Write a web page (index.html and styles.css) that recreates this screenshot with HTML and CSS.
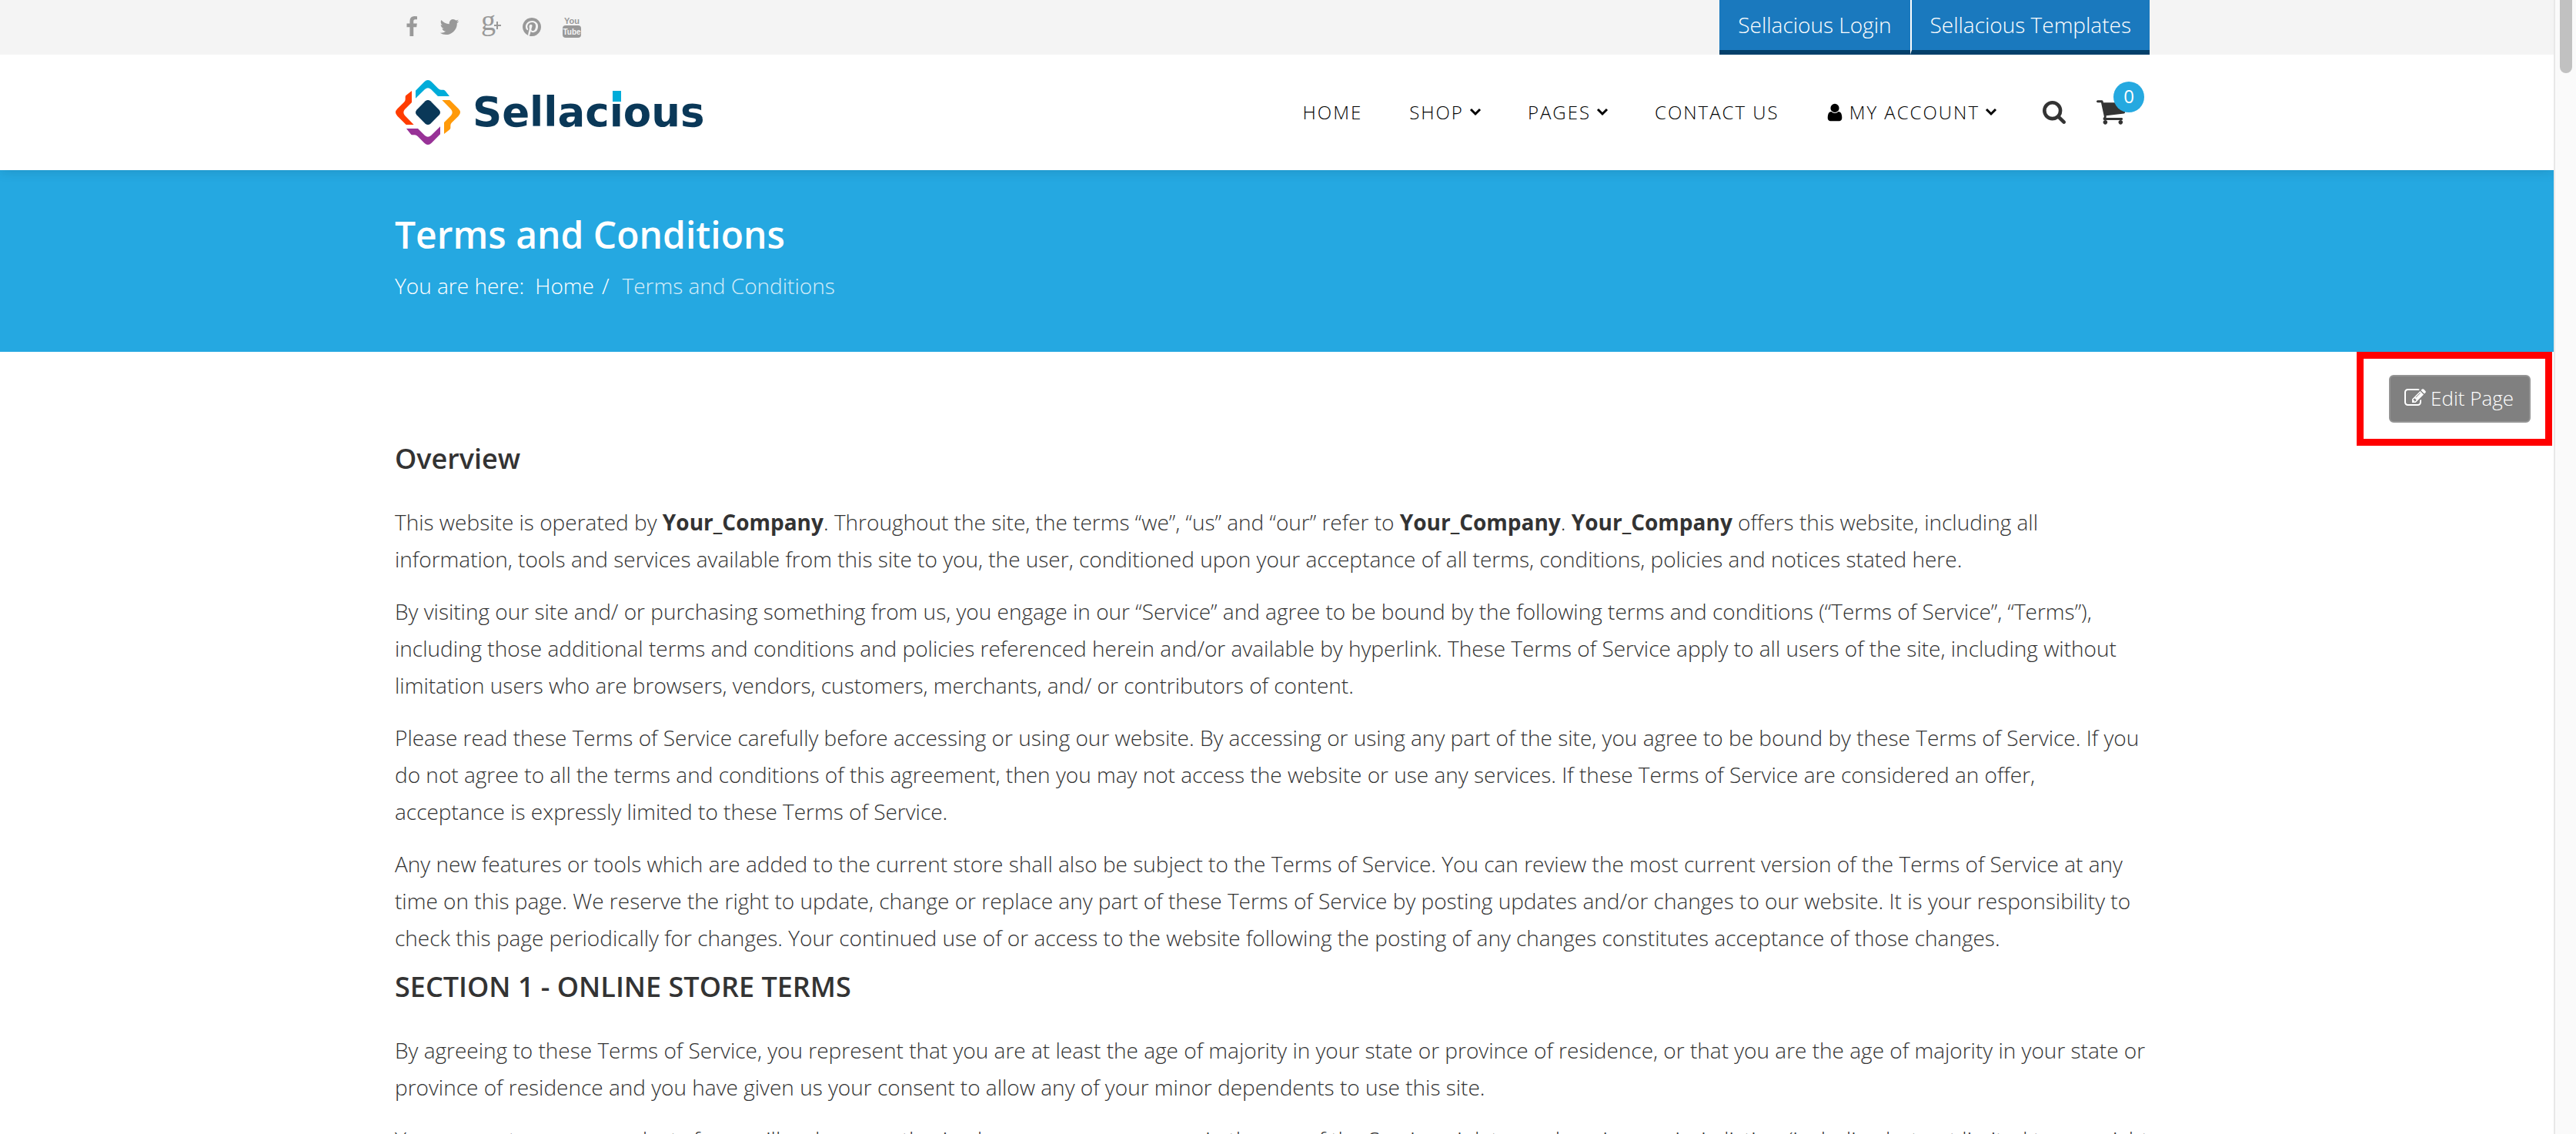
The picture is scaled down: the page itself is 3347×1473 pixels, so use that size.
FILE: index.html
```html
<!DOCTYPE html>
<html lang="en">
<head>
<meta charset="utf-8">
<title>Terms and Conditions</title>
<link rel="stylesheet" href="styles.css">
</head>
<body>
<div class="viewport">
  <div class="page">
    <div class="topbar">
      <div class="container topbar-inner">
        <nav class="social" aria-label="Social">
          <a href="#" aria-label="Facebook"><svg width="16" height="28" viewBox="384 0 1024 1792"><path d="M1343 12v264h-157q-86 0-116 36t-30 108v189h293l-39 296h-254v759h-306v-759h-255v-296h255v-218q0-186 104-288.5t277-102.5q147 0 228 12z"/></svg></a>
          <a href="#" aria-label="Twitter"><svg width="26" height="28" viewBox="64 0 1664 1792"><path d="M1684 408q-67 98-162 167 1 14 1 42 0 130-38 259.5t-115.5 248.5-184.5 210.5-258 146-323 54.5q-271 0-496-145 35 4 78 4 225 0 401-138-105-2-188-64.5t-114-159.5q33 5 61 5 43 0 85-11-112-23-185.5-111.5t-73.5-205.5v-4q68 38 146 41-66-44-105-115t-39-154q0-88 44-163 121 149 294.5 238.5t371.5 99.5q-8-38-8-74 0-134 94.5-228.5t228.5-94.5q140 0 236 102 109-21 205-78-37 115-142 178 93-10 186-50z"/></svg></a>
          <a href="#" aria-label="Google Plus"><svg width="26" height="28" viewBox="0 0 26 28"><text class="gplus" x="0" y="18">g</text><path d="M17 11h3V7h2v4h4v2h-4v4h-2v-4h-3z"/></svg></a>
          <a href="#" aria-label="Pinterest"><svg width="24" height="28" viewBox="128 0 1536 1792"><path d="M1664 896q0 209-103 385.5t-279.5 279.5-385.5 103q-111 0-218-32 59-93 78-164 9-34 54-211 20 39 73 67.5t114 28.5q121 0 216-68.5t147-188.5 52-270q0-114-59.5-214t-172.5-163-255-63q-105 0-196 29t-154.5 77-109 110.5-67 129.5-21.5 134q0 104 40 183t117 111q30 12 38-20 2-7 8-31t8-30q6-23-11-43-51-61-51-151 0-151 104.5-259.5t273.5-108.5q151 0 235.5 82t84.5 213q0 170-68.5 289t-175.5 119q-61 0-98-43.5t-23-104.5q8-35 26.5-93.5t30-103 11.5-75.5q0-50-27-83t-77-33q-62 0-105 57t-43 142q0 73 25 122l-99 418q-17 70-13 177-206-91-333-281t-127-423q0-209 103-385.5t279.5-279.5 385.5-103 385.5 103 279.5 279.5 103 385.5z"/></svg></a>
          <a href="#" aria-label="YouTube"><svg width="24" height="28" viewBox="0 0 24 28"><rect x="0" y="12" width="24" height="16" rx="4"/><text class="tube" x="12" y="10">You</text><text class="tube tube-light" x="12" y="24">Tube</text></svg></a>
        </nav>
        <div class="toplinks">
          <a href="#">Sellacious Login</a>
          <a href="#">Sellacious Templates</a>
        </div>
      </div>
    </div>

    <header class="header">
      <div class="container header-inner">
        <a class="logo" href="#">
          <svg width="84" height="84" viewBox="0 0 252 252" aria-hidden="true">
            <defs><path id="arm" d="M78 71V41L112 7Q126-7 140 7L166 33Q171 38 177 38H187Q191 38 194 43L210 63H165L138 36Q126 26 114 36Z"/></defs>
            <use href="#arm" fill="#00acd9"/>
            <use href="#arm" fill="#ff9a0a" transform="rotate(90 126 126)"/>
            <use href="#arm" fill="#983297" transform="rotate(180 126 126)"/>
            <use href="#arm" fill="#ff3c00" transform="rotate(270 126 126)"/>
            <path fill="#0a3858" d="M116 82Q126 74 136 82L170 116Q178 126 170 136L136 170Q126 178 116 170L82 136Q74 126 82 116Z"/>
          </svg>
          <span class="wordmark">Sellac<span class="dotted">i</span>ous</span>
        </a>
        <nav class="menu" aria-label="Main">
          <a href="#">HOME</a>
          <a href="#">SHOP<svg class="chev" width="14" height="10" viewBox="0 0 14 10"><path d="M1 1l6 6 6-6"/></svg></a>
          <a href="#">PAGES<svg class="chev" width="14" height="10" viewBox="0 0 14 10"><path d="M1 1l6 6 6-6"/></svg></a>
          <a href="#">CONTACT US</a>
          <a href="#"><svg class="user" width="22" height="26" viewBox="224 0 1344 1792"><path d="M1536 1399q0 109-62.5 187t-150.5 78h-854q-88 0-150.5-78t-62.5-187q0-85 8.5-160.5t31.5-152 58.5-131 94-89 134.5-34.5q131 128 313 128t313-128q76 0 134.5 34.5t94 89 58.5 131 31.5 152 8.5 160.5zm-256-887q0 159-112.5 271.5t-271.5 112.5-271.5-112.5-112.5-271.5 112.5-271.5 271.5-112.5 271.5 112.5 112.5 271.5z"/></svg>MY ACCOUNT<svg class="chev" width="14" height="10" viewBox="0 0 14 10"><path d="M1 1l6 6 6-6"/></svg></a>
        </nav>
        <div class="tools">
          <button class="tool" type="button" aria-label="Search"><svg width="30" height="30" viewBox="64 128 1664 1664"><path d="M1216 832q0-185-131.5-316.5t-316.5-131.5-316.5 131.5-131.5 316.5 131.5 316.5 316.5 131.5 316.5-131.5 131.5-316.5zm512 832q0 52-38 90t-90 38q-54 0-90-38l-343-342q-179 124-399 124-143 0-273.5-55.5t-225-150-150-225-55.5-273.5 55.5-273.5 150-225 225-150 273.5-55.5 273.5 55.5 225 150 150 225 55.5 273.5q0 220-124 399l343 343q37 37 37 90z"/></svg></button>
          <button class="tool cart" type="button" aria-label="Cart"><svg width="37" height="32" viewBox="64 256 1664 1408"><path d="M704 1536q0 52-38 90t-90 38-90-38-38-90 38-90 90-38 90 38 38 90zm896 0q0 52-38 90t-90 38-90-38-38-90 38-90 90-38 90 38 38 90zm128-1088v512q0 24-16.5 42.5t-40.5 21.5l-1044 122q13 60 13 70 0 16-24 64h920q26 0 45 19t19 45-19 45-45 19h-1024q-26 0-45-19t-19-45q0-11 8-31.5t16-36 21.5-40 15.5-29.5l-177-823h-204q-26 0-45-19t-19-45 19-45 45-19h256q16 0 28.5 6.5t19.5 15.5 13 24.5 8 26 5.5 29.5 4.5 26h1201q26 0 45 19t19 45z"/></svg><span class="badge">0</span></button>
        </div>
      </div>
    </header>

    <section class="banner">
      <div class="container">
        <h1>Terms and Conditions</h1>
        <nav class="crumbs" aria-label="Breadcrumb">
          <span>You are here:</span>
          <a href="#">Home</a>
          <span class="slash">/</span>
          <span class="current">Terms and Conditions</span>
        </nav>
      </div>
    </section>

    <main class="main">
      <div class="edit-frame">
        <button class="edit" type="button"><svg width="28" height="28" viewBox="0 0 1792 1792"><path d="M888 1184l116-116-152-152-116 116v56h96v96h56zm440-720q-16-16-33 1l-350 350q-17 17-1 33t33-1l350-350q17-17 1-33zm80 594v190q0 119-84.5 203.5t-203.5 84.5h-832q-119 0-203.5-84.5t-84.5-203.5v-832q0-119 84.5-203.5t203.5-84.5h832q63 0 117 25 15 7 18 23 3 17-9 29l-49 49q-14 14-32 8-23-6-45-6h-832q-66 0-113 47t-47 113v832q0 66 47 113t113 47h832q66 0 113-47t47-113v-126q0-13 9-22l64-64q15-15 35-7t20 29zm-96-738l288 288-672 672h-288v-288zm444 132l-92 92-288-288 92-92q28-28 68-28t68 28l152 152q28 28 28 68t-28 68z"/></svg>Edit Page</button>
      </div>
      <article class="container article">
        <h2>Overview</h2>
        <p>This website is operated by <strong>Your_Company</strong>. Throughout the site, the terms “we”, “us” and “our” refer to <strong>Your_Company</strong>. <strong>Your_Company</strong> offers this website, including all information, tools and services available from this site to you, the user, conditioned upon your acceptance of all terms, conditions, policies and notices stated here.</p>
        <p>By visiting our site and/ or purchasing something from us, you engage in our “Service” and agree to be bound by the following terms and conditions (“Terms of Service”, “Terms”), including those additional terms and conditions and policies referenced herein and/or available by hyperlink. These Terms of Service apply to all users of the site, including without limitation users who are browsers, vendors, customers, merchants, and/ or contributors of content.</p>
        <p>Please read these Terms of Service carefully before accessing or using our website. By accessing or using any part of the site, you agree to be bound by these Terms of Service. If you do not agree to all the terms and conditions of this agreement, then you may not access the website or use any services. If these Terms of Service are considered an offer, acceptance is expressly limited to these Terms of Service.</p>
        <p>Any new features or tools which are added to the current store shall also be subject to the Terms of Service. You can review the most current version of the Terms of Service at any time on this page. We reserve the right to update, change or replace any part of these Terms of Service by posting updates and/or changes to our website. It is your responsibility to check this page periodically for changes. Your continued use of or access to the website following the posting of any changes constitutes acceptance of those changes.</p>
        <h2>SECTION 1 - ONLINE STORE TERMS</h2>
        <p>By agreeing to these Terms of Service, you represent that you are at least the age of majority in your state or province of residence, or that you are the age of majority in your state or province of residence and you have given us your consent to allow any of your minor dependents to use this site.</p>
        <p>You may not use our products for any illegal or unauthorized purpose nor may you, in the use of the Service, violate any laws in your jurisdiction (including but not limited to copyright laws).</p>
      </article>
    </main>
  </div>
  <div class="scrollbar" aria-hidden="true"><div class="thumb"></div></div>
</div>
</body>
</html>
```
FILE: styles.css
```css
* { box-sizing: border-box; }

body {
  margin: 0;
  font-family: "Open Sans", "Noto Sans", sans-serif;
  font-size: 28px;
  font-weight: 300;
  line-height: 48px;
  color: #333;
  background: #fff;
}

a { color: inherit; text-decoration: none; }
button { font: inherit; border: 0; padding: 0; background: none; cursor: pointer; }
svg { display: block; fill: currentColor; overflow: visible; }

.viewport { display: flex; height: 100vh; overflow: hidden; }
.page { flex: 1; min-width: 0; overflow: hidden; }
.container { width: 100%; max-width: 2292px; margin: 0 auto; padding-right: 12px; }

/* Top bar */
.topbar { position: relative; z-index: 1; background: #f4f4f4; }
.topbar-inner { display: flex; justify-content: space-between; align-items: center; height: 71px; }
.social { display: flex; gap: 28px; padding: 0 0 2px 14px; color: #999; }
.gplus { font: 38px "Liberation Serif", serif; }
.tube { font: bold 11px "Liberation Sans Narrow", "Liberation Sans", sans-serif; text-anchor: middle; }
.tube-light { font-size: 10px; fill: #f4f4f4; }
.toplinks { display: flex; align-self: stretch; color: #fff; }
.toplinks a {
  padding: 8px 24px 9px;
  background: #1a79be;
  border-bottom: 6px solid #04406b;
}
.toplinks a + a { border-left: 2px solid #fff; }

/* Header */
.header { position: relative; background: #fff; box-shadow: 0 0 16px rgba(0, 0, 0, 0.15); }
.header-inner { display: flex; align-items: center; height: 150px; }
.logo { display: flex; align-items: center; gap: 16px; padding-left: 1px; margin-right: auto; }
.wordmark { font: bold 53px/56px "DejaVu Sans", sans-serif; color: #0a3858; }
.dotted { position: relative; }
.dotted::before {
  content: "";
  position: absolute;
  left: 4px;
  top: 3px;
  width: 11px;
  height: 14px;
  background: #00acd9;
}
.menu { display: flex; gap: 61px; font-size: 24px; letter-spacing: 2px; color: #000; }
.menu a { display: flex; align-items: center; }
.chev { margin-left: 8px; fill: none; stroke: #000; stroke-width: 3; }
.user { margin-right: 8px; }
.tools { display: flex; align-items: center; gap: 40px; margin: 0 32px 0 60px; }
.tool { color: #333; }
.cart { position: relative; }
.badge {
  position: absolute;
  left: 22px;
  top: -24px;
  width: 40px;
  height: 40px;
  border-radius: 50%;
  background: #25a9e0;
  color: #fff;
  font-size: 24px;
  font-weight: 400;
  line-height: 38px;
}

/* Page banner */
.banner { background: #25a8e1; color: #fff; padding: 52px 0 62px; }
.banner h1 { margin: 0; font-size: 48px; font-weight: 600; line-height: 64px; }
.crumbs { display: flex; margin-top: 10px; }
.crumbs a { margin-left: 14px; }
.slash { margin: 0 17px 0 10px; }
.current { opacity: 0.8; }

/* Content */
.main { position: relative; padding-top: 115px; }
.edit-frame {
  position: absolute;
  top: 0;
  right: 2px;
  padding: 21px 19px 21px 33px;
  border: 9px solid #f00;
}
.edit {
  display: flex;
  align-items: center;
  gap: 6px;
  height: 62px;
  padding: 0 20px 2px 18px;
  border: 2px solid #949494;
  border-radius: 6px;
  background: #808080;
  color: #fff;
  font-size: 26px;
}
.article h2 { margin: 0 0 34px; font-size: 36px; font-weight: 600; line-height: 48px; }
.article p { margin: 0 0 20px; }
.article p + h2 { margin-top: -4px; }
.article strong { font-weight: 700; }

/* Scroll track */
.scrollbar { width: 29px; flex: none; border-left: 2px solid #e8e8e8; background: #fafafa; }
.thumb { width: 16px; height: 95px; margin-left: 6px; border-radius: 0 0 8px 8px; background: #c1c1c1; }
```
